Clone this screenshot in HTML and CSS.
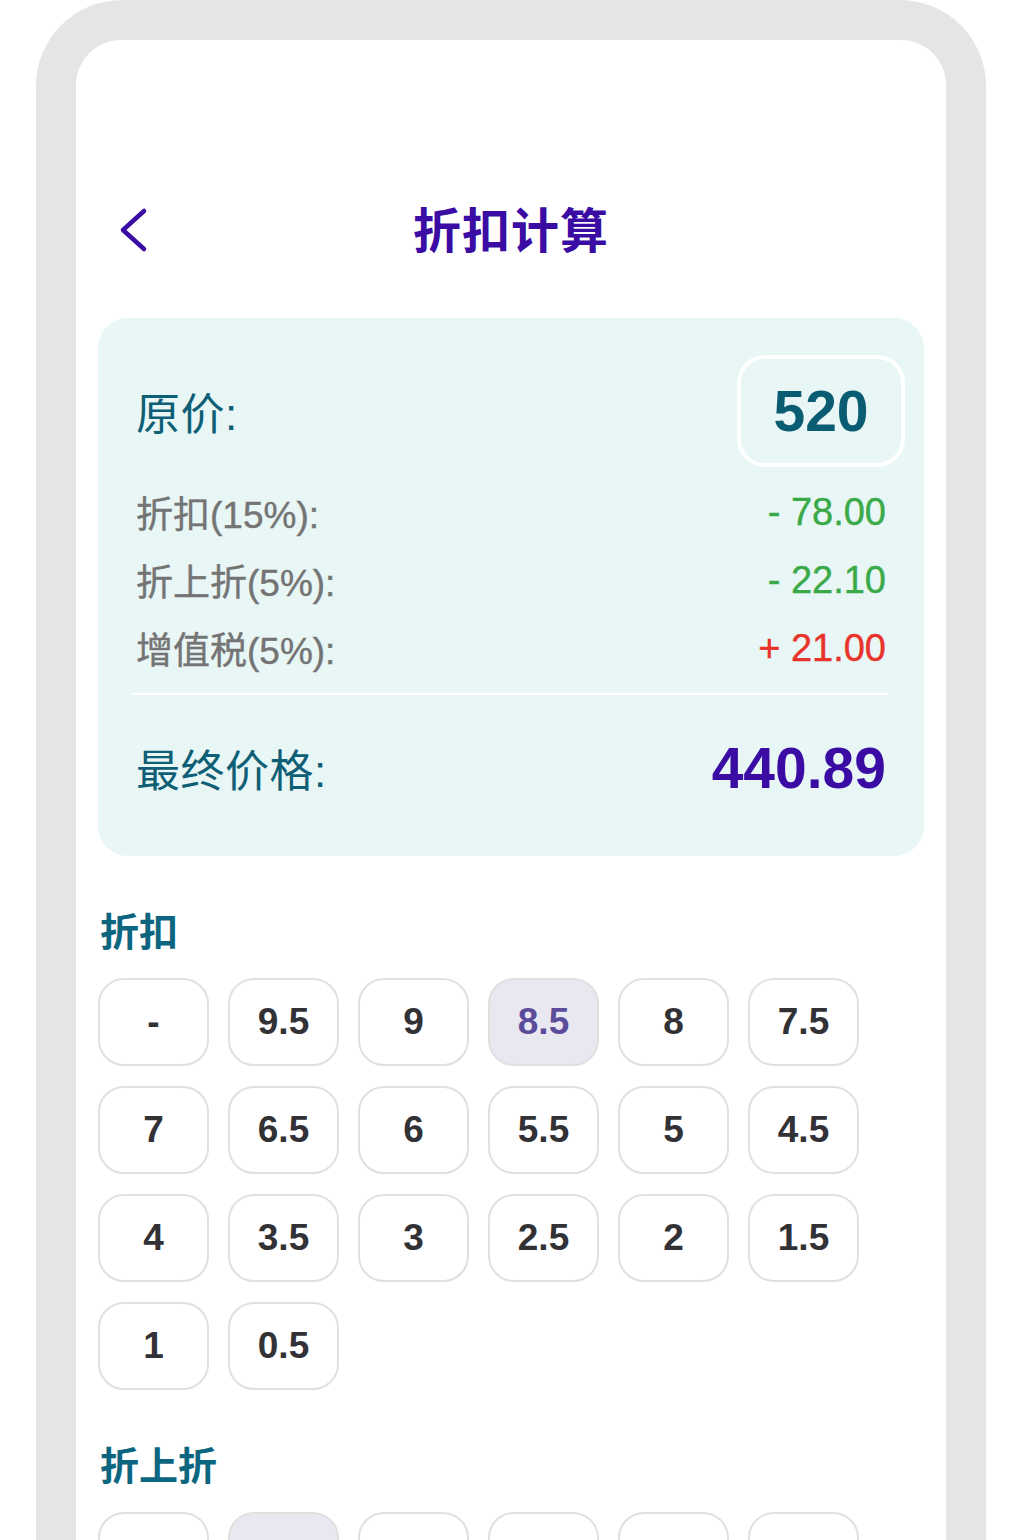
FILE: index.html
```html
<!DOCTYPE html>
<html lang="zh-CN">
<head>
<meta charset="utf-8">
<title>折扣计算</title>
<link rel="stylesheet" href="styles.css">
</head>
<body>
<div class="frame">
  <div class="screen">
    <header class="topbar">
      <button class="back" aria-label="返回">
        <svg width="30" height="48" viewBox="0 0 30 48"><polyline points="26,5 5,24 26,43" fill="none" stroke="#3a0ca3" stroke-width="4.5" stroke-linecap="round" stroke-linejoin="round"/></svg>
      </button>
      <h1 class="title">折扣计算</h1>
      <span></span>
    </header>

    <section class="card">
      <div class="row-main">
        <span class="main-label">原价:</span>
        <div class="price-box">520</div>
      </div>
      <div class="row"><span class="label">折扣(15%):</span><span class="val green">- 78.00</span></div>
      <div class="row"><span class="label">折上折(5%):</span><span class="val green">- 22.10</span></div>
      <div class="row"><span class="label">增值税(5%):</span><span class="val red">+ 21.00</span></div>
      <div class="divider"></div>
      <div class="row-final">
        <span class="main-label">最终价格:</span>
        <span class="final">440.89</span>
      </div>
    </section>

    <section class="group">
      <h2 class="group-title">折扣</h2>
      <div class="grid">
        <button class="opt">-</button>
        <button class="opt">9.5</button>
        <button class="opt">9</button>
        <button class="opt active">8.5</button>
        <button class="opt">8</button>
        <button class="opt">7.5</button>
        <button class="opt">7</button>
        <button class="opt">6.5</button>
        <button class="opt">6</button>
        <button class="opt">5.5</button>
        <button class="opt">5</button>
        <button class="opt">4.5</button>
        <button class="opt">4</button>
        <button class="opt">3.5</button>
        <button class="opt">3</button>
        <button class="opt">2.5</button>
        <button class="opt">2</button>
        <button class="opt">1.5</button>
        <button class="opt">1</button>
        <button class="opt">0.5</button>
      </div>
    </section>

    <section class="group">
      <h2 class="group-title">折上折</h2>
      <div class="grid">
        <button class="opt" aria-label="不使用"></button>
        <button class="opt active" aria-label="9.5"></button>
        <button class="opt" aria-label="9"></button>
        <button class="opt" aria-label="8.5"></button>
        <button class="opt" aria-label="8"></button>
        <button class="opt" aria-label="7.5"></button>
      </div>
    </section>
  </div>
</div>
</body>
</html>
```

FILE: styles.css
```css
* { box-sizing: border-box; }
html, body {
  margin: 0;
  padding: 0;
  height: 1540px;
  overflow: hidden;
  background: #ffffff;
  font-family: "Liberation Sans", "Noto Sans CJK SC", sans-serif;
}
.frame {
  margin-left: 36px;
  width: 950px;
  height: 1540px;
  background: #e5e5e5;
  border-radius: 86px 86px 0 0;
  padding: 40px 40px 0;
  overflow: hidden;
}
.screen {
  background: #ffffff;
  height: 1600px;
  border-radius: 45px 45px 0 0;
  padding: 150px 22px 0;
}
.topbar {
  display: grid;
  grid-template-columns: 1fr auto 1fr;
  align-items: center;
  height: 80px;
}
.back {
  justify-self: start;
  margin-left: 20px;
  padding: 0;
  border: 0;
  background: none;
  display: flex;
  width: 30px;
  height: 48px;
}
.title {
  margin: 0;
  font-family: "Noto Sans CJK SC", sans-serif;
  font-weight: 700;
  font-size: 48px;
  line-height: 80px;
  color: #3a0ca3;
  letter-spacing: 1px;
  transform: translateY(-3px);
}
.card {
  margin-top: 48px;
  background: #e8f6f6;
  border-radius: 30px;
  padding: 37px 38px 38px;
}
.row-main {
  display: flex;
  align-items: center;
  justify-content: space-between;
}
.main-label {
  font-size: 44px;
  color: #0e5f75;
  letter-spacing: 0.5px;
}
.price-box {
  width: 168px;
  height: 112px;
  margin-right: -19px;
  border: 4px solid #ffffff;
  border-radius: 28px;
  display: flex;
  align-items: center;
  justify-content: center;
  font-weight: 700;
  font-size: 57px;
  color: #0a5c72;
}
.row {
  display: flex;
  justify-content: space-between;
  align-items: center;
  height: 68px;
}
.row-main + .row { margin-top: 11px; }
.label {
  font-size: 37px;
  color: #747474;
  -webkit-text-stroke: 0.4px #747474;
}
.val {
  font-size: 38px;
  -webkit-text-stroke: 0.4px currentColor;
}
.green { color: #3aaa48; }
.red { color: #e8332a; }
.divider {
  height: 2px;
  background: #ffffff;
  margin: 11px -3px 0;
}
.row-final {
  margin-top: 23px;
  height: 100px;
  display: flex;
  align-items: center;
  justify-content: space-between;
}
.final {
  font-weight: 700;
  font-size: 57px;
  color: #3a0ca3;
}
.group-title {
  margin: 45px 0 0 2px;
  font-family: "Noto Sans CJK SC", sans-serif;
  font-weight: 700;
  font-size: 39px;
  line-height: 56px;
  color: #0d6680;
}
.grid {
  margin-top: 21px;
  display: grid;
  grid-template-columns: repeat(6, 111px);
  column-gap: 19px;
  row-gap: 20px;
}
.opt {
  height: 88px;
  border: 2px solid #e0e0e0;
  border-radius: 26px;
  background: #ffffff;
  font-family: "Liberation Sans", sans-serif;
  font-weight: 700;
  font-size: 37px;
  color: #313136;
  padding: 0;
}
.opt.active {
  background: #e9e8f0;
  color: #5b4b9b;
}
```
